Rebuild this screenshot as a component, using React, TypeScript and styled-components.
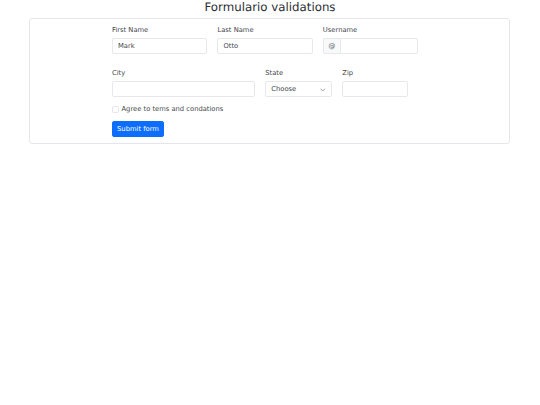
import React from 'react'
import styled, { createGlobalStyle } from 'styled-components'

const GlobalStyle = createGlobalStyle`
  html, body { margin:0; padding:0; background:#fff; }
  body {
    font-family:"DejaVu Sans", "Liberation Sans", sans-serif;
    font-size:6.75px;
    line-height:1.5;
    color:#44484d;
    text-rendering:geometricPrecision;
  }
  * { box-sizing:border-box; }
`

const Title = styled.h3`
  margin:0 0 3.4px;
  font-size:11.8px;
  font-weight:500;
  line-height:1.2;
  text-align:center;
  color:#2a2e33;
`

const Card = styled.div`
  width:481px;
  margin:0 0 0 29px;
  border:1px solid #e4e6e9;
  border-radius:3px;
  padding:6px 0 6.2px 82px;
`

const Form = styled.form`
  width:306px;
  display:flex;
  flex-direction:column;
`

const Row = styled.div<{ $cols: string; $mb: number }>`
  display:grid;
  grid-template-columns:${p => p.$cols};
  column-gap:10.3px;
  margin-bottom:${p => p.$mb}px;
`

const Field = styled.div`
  display:flex;
  flex-direction:column;
  min-width:0;
`

const Label = styled.label`
  display:block;
  margin-bottom:3.6px;
  line-height:10.1px;
`

const Input = styled.input`
  display:block;
  width:100%;
  height:16px;
  padding:2.5px 5px;
  font:inherit;
  font-size:6.75px;
  color:#44484d;
  background:#fff;
  border:1px solid #e6e8eb;
  border-radius:2px;
  outline:none;
`

const Group = styled.div`
  display:flex;
  width:100%;
`

const Addon = styled.span`
  display:flex;
  align-items:center;
  justify-content:center;
  width:18px;
  height:16px;
  flex-shrink:0;
  background:#f8f9fa;
  border:1px solid #e6e8eb;
  border-radius:2px 0 0 2px;
  color:#55595e;
  font-size:6.75px;
`

const GroupInput = styled(Input)`
  flex:1;
  margin-left:-1px;
  border-radius:0 2px 2px 0;
`

const SelectBox = styled.div`
  position:relative;
  height:16px;
  display:flex;
  align-items:center;
  padding:0 5px;
  border:1px solid #e6e8eb;
  border-radius:2px;
  background:#fff;
`

const Chevron = styled.svg`
  position:absolute;
  right:5px;
  top:5.5px;
  width:5.5px;
  height:4px;
`

const Check = styled.div`
  display:flex;
  align-items:center;
  gap:3px;
  min-height:10.1px;
  margin-bottom:6.4px;
`

const Box = styled.span`
  width:6.5px;
  height:6.5px;
  border:1px solid #e3e5e8;
  border-radius:1.7px;
  background:#fff;
  flex-shrink:0;
`

const Button = styled.button`
  align-self:flex-start;
  width:52px;
  height:16px;
  padding:0;
  font:inherit;
  font-size:6.75px;
  color:#fff;
  background:#0d6efd;
  border:1px solid #0d6efd;
  border-radius:2px;
`

export default function App() {
  return (
    <>
      <GlobalStyle />
      <Title>Formulario validations</Title>
      <Card>
        <Form onSubmit={e => e.preventDefault()}>
          <Row $cols="1fr 1fr 1fr" $mb={13.3}>
            <Field>
              <Label>First Name</Label>
              <Input defaultValue="Mark" />
            </Field>
            <Field>
              <Label>Last Name</Label>
              <Input defaultValue="Otto" />
            </Field>
            <Field>
              <Label>Username</Label>
              <Group>
                <Addon>@</Addon>
                <GroupInput />
              </Group>
            </Field>
          </Row>
          <Row $cols="143px 66.7px 66px" $mb={7.2}>
            <Field>
              <Label>City</Label>
              <Input />
            </Field>
            <Field>
              <Label>State</Label>
              <SelectBox>
                Choose
                <Chevron viewBox="0 0 16 12">
                  <path d="M2 3l6 6 6-6" fill="none" stroke="#6c7075" strokeWidth="2" strokeLinecap="round" strokeLinejoin="round" />
                </Chevron>
              </SelectBox>
            </Field>
            <Field>
              <Label>Zip</Label>
              <Input />
            </Field>
          </Row>
          <Check>
            <Box />
            <span>Agree to tems and condations</span>
          </Check>
          <Button type="submit">Submit form</Button>
        </Form>
      </Card>
    </>
  )
}
